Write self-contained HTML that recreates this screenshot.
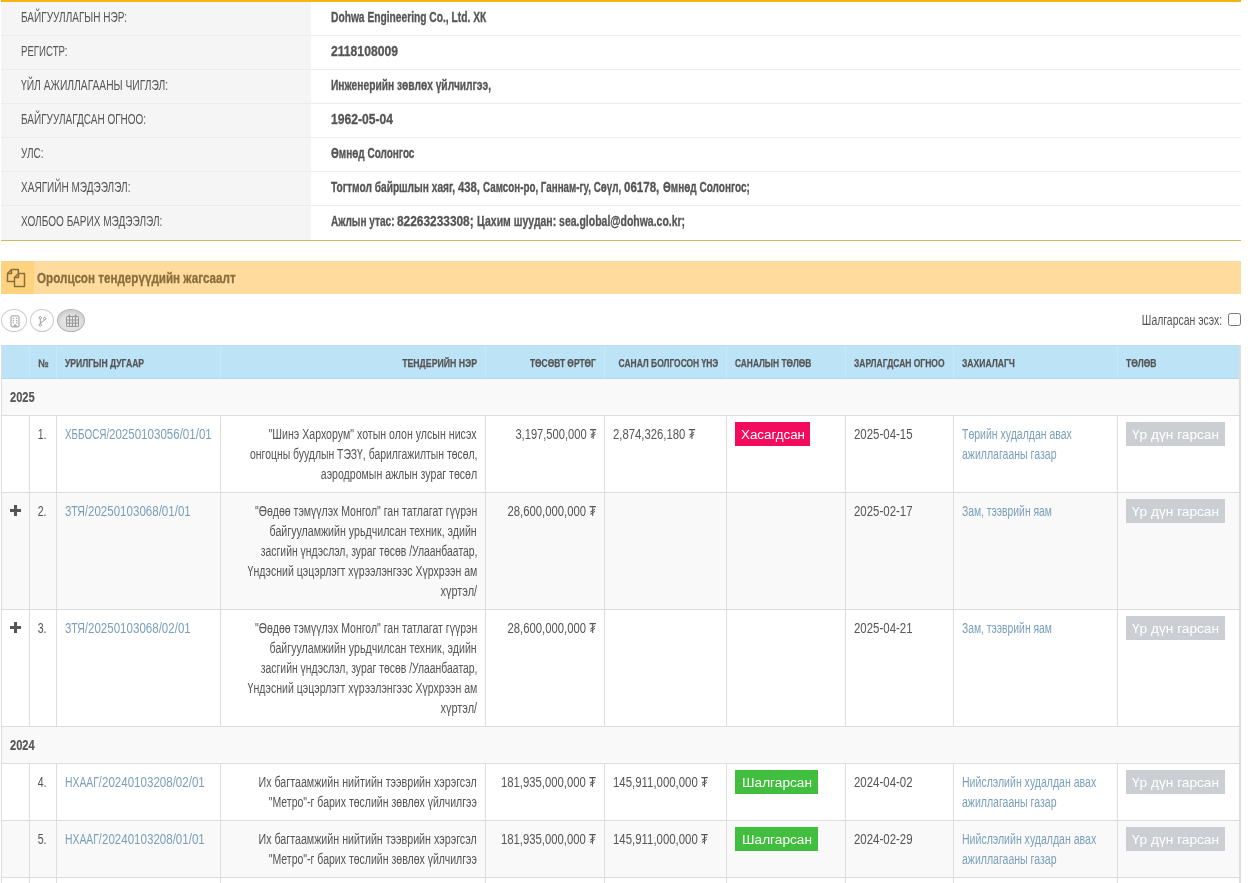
<!DOCTYPE html>
<html lang="mn"><head><meta charset="utf-8"><title>Dohwa Engineering Co., Ltd. ХК</title>
<style>
*{box-sizing:border-box}
html,body{margin:0;padding:0;background:#fff}
body{font-family:"Liberation Sans",sans-serif;font-size:14px;line-height:20px;color:#555;width:1251px;height:883px;overflow:hidden;position:relative}
#wrap{position:absolute;left:1px;top:0;width:1240px;will-change:transform}
table{border-collapse:separate;border-spacing:0;table-layout:fixed}
td,th{padding:0;overflow:visible}
.t{display:inline-block;white-space:nowrap;transform-origin:0 0}
.t.m{transform:none}
.u{display:inline-block;position:relative;height:20px;vertical-align:top}
.s{position:absolute;left:0;top:0;white-space:pre;transform-origin:0 0}
.ln{display:block;height:20px;line-height:20px;position:relative;white-space:nowrap}
.ln .t{position:absolute;left:0;top:0}
.r .ln .t{left:auto;right:0;transform-origin:100% 0}
.list td .ln .t{top:1px}
.list tr.g td .ln .t{top:0}
/* organisation info */
.info{width:1240px;border-top:2px solid #f4b415}
.info td{height:34px;padding:5px 0 0 20px;border-bottom:1px solid #ebebeb;vertical-align:top}
.info td.l{width:310px;background:#f5f5f5}
.info td.v{font-weight:700;-webkit-text-stroke:.3px #555}
.info tr:last-child td{height:35px;border-bottom-color:#cdbb5c}
/* section title */
.band{margin-top:20px;height:33px;background:#ffdc9e;position:relative;color:#8a6d3b;font-weight:700;font-size:16px;padding:7px 0 0 36px;-webkit-text-stroke:.3px #8a6d3b}
.band .ic{position:absolute;left:0;top:0;width:33px;height:33px;background:#ffd27f}
.band .ic svg{position:absolute;left:5px;top:7px}
/* toolbar */
.tools{height:51px;position:relative}
.cb{position:absolute;top:15px;height:23px;border:1px solid #ccc;border-radius:50%;background:#fff;padding:0;margin:0;font:inherit;display:block}
.cb svg{position:absolute}
.cb.on{background:#e2e2e2;border-color:#b4b4b4;box-shadow:inset 0 2px 4px rgba(0,0,0,.12)}
.chk{-webkit-appearance:none;appearance:none;margin:0;padding:0;display:block;position:absolute;right:0;top:19px;width:13px;height:13px;border:1px solid #767676;border-radius:2.5px;background:#fff}
.lab{position:absolute;right:19px;top:17px;width:300px}
/* tender list */
.list{width:1240px;border-left:1px solid #ddd;border-right:2px solid #ddd}
.list th{background:#bde3f7;height:34px;font-size:12px;font-weight:700;color:#555;-webkit-text-stroke:.25px #555;padding:7px 8px 0;text-align:left;vertical-align:top;border-left:1px solid #c8e7f8;border-top:1px solid #c3dbe8;border-bottom:1px solid #b4d9ec}
.list th:first-child,.list td:first-child{border-left:0}
.list td{padding:8px 8px 0;border-left:1px solid #ddd;border-bottom:1px solid #ddd;vertical-align:top}
.list td.n{padding-right:9px}
.list tr.g td{background:#f9f9f9;font-weight:700;font-size:15px;height:37px;-webkit-text-stroke:.15px #555;padding:8px 8px 0}
.list tr.e td{background:#f9f9f9}
.h77 td{height:77px}.h117 td{height:117px}.h57 td{height:57px}.h20 td{height:20px}
a{color:#7a9fba;text-decoration:none}
.b{display:block;height:24px;line-height:26px;color:#fff;font-size:13px;margin-top:-2px;position:relative;white-space:nowrap}
.b .t{position:absolute;top:0}
.pl{display:block;position:relative;width:11px;height:11px;margin:4px 0 0 0}
.pl:before,.pl:after{content:"";position:absolute;background:#555}
.pl:before{left:0;top:4px;width:11px;height:3px}
.pl:after{left:4px;top:0;width:3px;height:11px}
</style></head><body>
<div id="wrap">
<table class="info">
<tr><td class="l"><span class="ln"><span class="t" style="transform:scaleX(0.7161)">БАЙГУУЛЛАГЫН НЭР:</span></span></td><td class="v"><span class="ln"><span class="t" style="transform:scaleX(0.7310)">Dohwa Engineering Co., Ltd. ХК</span></span></td></tr>
<tr><td class="l"><span class="ln"><span class="t" style="transform:scaleX(0.6888)">РЕГИСТР:</span></span></td><td class="v"><span class="ln"><span class="t" style="transform:scaleX(0.8681)">2118108009</span></span></td></tr>
<tr><td class="l"><span class="ln"><span class="t" style="transform:scaleX(0.7326)">ҮЙЛ АЖИЛЛАГААНЫ ЧИГЛЭЛ:</span></span></td><td class="v"><span class="ln"><span class="t" style="transform:scaleX(0.7298)">Инженерийн зөвлөх үйлчилгээ,</span></span></td></tr>
<tr><td class="l"><span class="ln"><span class="t" style="transform:scaleX(0.7140)">БАЙГУУЛАГДСАН ОГНОО:</span></span></td><td class="v"><span class="ln"><span class="t" style="transform:scaleX(0.8641)">1962-05-04</span></span></td></tr>
<tr><td class="l"><span class="ln"><span class="t" style="transform:scaleX(0.7110)">УЛС:</span></span></td><td class="v"><span class="ln"><span class="t" style="transform:scaleX(0.7139)">Өмнөд Солонгос</span></span></td></tr>
<tr><td class="l"><span class="ln"><span class="t" style="transform:scaleX(0.7165)">ХАЯГИЙН МЭДЭЭЛЭЛ:</span></span></td><td class="v"><span class="ln"><span class="t m" style=""><span class="u" style="width:127.03px"><span class="s" style="transform:scaleX(0.7273)">Тогтмол байршлын хаяг, </span></span><span class="u" style="width:25.12px"><span class="s" style="transform:scaleX(0.8068)">438, </span></span><span class="u" style="width:141.00px"><span class="s" style="transform:scaleX(0.7004)">Самсон-ро, Ганнам-гу, Сөүл, </span></span><span class="u" style="width:38.50px"><span class="s" style="transform:scaleX(0.8241)">06178, </span></span><span class="u" style="width:86.95px"><span class="s" style="transform:scaleX(0.7155)">Өмнөд Солонгос;</span></span></span></span></td></tr>
<tr><td class="l"><span class="ln"><span class="t" style="transform:scaleX(0.7189)">ХОЛБОО БАРИХ МЭДЭЭЛЭЛ:</span></span></td><td class="v"><span class="ln"><span class="t m" style=""><span class="u" style="width:66.34px"><span class="s" style="transform:scaleX(0.7198)">Ажлын утас: </span></span><span class="u" style="width:80.00px"><span class="s" style="transform:scaleX(0.8492)">82263233308; </span></span><span class="u" style="width:208.11px"><span class="s" style="transform:scaleX(0.7480)">Цахим шуудан: sea.global@dohwa.co.kr;</span></span></span></span></td></tr>
</table>
<div class="band"><div class="ic"><svg width="20" height="20" viewBox="0 0 20 20" fill="none" stroke="#8a6d3b" stroke-width="1.5" stroke-linejoin="round"><path d="M8.3 13.5H1.5V5.5L5.5 1.5H12.3V5"/><path d="M5.5 1.5V5.5H1.5"/><path d="M8.5 9.5L12.5 5.5H18.5V18.5H8.5Z"/><path d="M12.5 5.5V9.5H8.5"/></svg></div><span class="ln"><span class="t" style="font-size:15px;transform:scaleX(0.7762)">Оролцсон тендерүүдийн жагсаалт</span></span></div>
<div class="tools">
<button type="button" class="cb" title="Байгууллага" style="left:0;width:26px"><svg style="left:8px;top:5px" width="10" height="13" viewBox="0 0 10 13" fill="none" stroke="#999" stroke-width="1"><rect x="1" y=".9" width="8" height="11" rx="1"/><path d="M2.7 3.4h1.4M5.9 3.4h1.4M2.7 5.6h1.4M5.9 5.6h1.4M2.7 7.8h1.4M5.9 7.8h1.4M4 11.9V10h2v1.9"/></svg></button>
<button type="button" class="cb" title="Салбар" style="left:29px;width:24px"><svg style="left:7px;top:6px" width="9" height="11" viewBox="0 0 9 11" fill="none" stroke="#999" stroke-width=".9"><circle cx="2.3" cy="1.8" r="1.2"/><circle cx="6.7" cy="2.6" r="1.2"/><circle cx="2.3" cy="9" r="1.2"/><path d="M2.3 3V7.8M6.7 3.8C6.7 5.6 2.3 5.4 2.3 7.6"/></svg></button>
<button type="button" class="cb on" title="Он" style="left:56px;width:28px"><svg style="left:8px;top:4px" width="13" height="13" viewBox="0 0 13 13" fill="none" stroke="#999" stroke-width="1"><rect x=".5" y="2.5" width="12" height="10" rx=".6"/><path d="M.5 6h12M.5 9.2h12M3.5 2.5v10M6.5 2.5v10M9.5 2.5v10"/><path d="M3.3 .6v2.6M9.7 .6v2.6" stroke-width="1.6"/></svg></button>
<span class="lab r"><span class="ln"><span class="t" style="font-size:13.8px;transform:scaleX(0.7569)">Шалгарсан эсэх:</span></span></span><input type="checkbox" class="chk">
</div>
<table class="list">
<colgroup><col style="width:27px"><col style="width:27px"><col style="width:164px"><col style="width:265px"><col style="width:119px"><col style="width:122px"><col style="width:119px"><col style="width:108px"><col style="width:164px"><col style="width:122px"></colgroup>
<thead><tr><th></th><th class="r n"><span class="ln"><span class="t" style="font-size:11.2px;transform:scaleX(0.8248)">№</span></span></th><th><span class="ln"><span class="t" style="font-size:11.2px;transform:scaleX(0.7665)">УРИЛГЫН ДУГААР</span></span></th><th class="r"><span class="ln"><span class="t" style="font-size:11.2px;transform:scaleX(0.7796)">ТЕНДЕРИЙН НЭР</span></span></th><th class="r"><span class="ln"><span class="t" style="font-size:11.2px;transform:scaleX(0.7505)">ТӨСӨВТ ӨРТӨГ</span></span></th><th class="r"><span class="ln"><span class="t" style="font-size:11.2px;transform:scaleX(0.7534)">САНАЛ БОЛГОСОН ҮНЭ</span></span></th><th><span class="ln"><span class="t" style="font-size:11.2px;transform:scaleX(0.7461)">САНАЛЫН ТӨЛӨВ</span></span></th><th><span class="ln"><span class="t" style="font-size:11.2px;transform:scaleX(0.7579)">ЗАРЛАГДСАН ОГНОО</span></span></th><th><span class="ln"><span class="t" style="font-size:11.2px;transform:scaleX(0.7655)">ЗАХИАЛАГЧ</span></span></th><th><span class="ln"><span class="t" style="font-size:11.2px;transform:scaleX(0.7588)">ТӨЛӨВ</span></span></th></tr></thead>
<tbody>
<tr class="g"><td colspan="10"><span class="ln"><span class="t" style="font-size:15px;transform:scaleX(0.7401)">2025</span></span></td></tr>
<tr class="h77"><td></td><td class="r n"><span class="ln"><span class="t" style="font-size:13.8px;transform:scaleX(0.7639)">1.</span></span></td><td><span class="ln"><a href="#"><span class="t m" style="font-size:13.8px;"><span class="u" style="width:44.16px"><span class="s" style="transform:scaleX(0.7162)">ХББОСЯ/</span></span><span class="u" style="width:102.77px"><span class="s" style="transform:scaleX(0.8371)">20250103056/01/01</span></span></span></a></span></td><td class="r"><span class="ln"><span class="t" style="font-size:13.8px;transform:scaleX(0.7690)">&quot;Шинэ Хархорум&quot; хотын олон улсын нисэх</span></span><span class="ln"><span class="t" style="font-size:13.8px;transform:scaleX(0.7544)">онгоцны буудлын ТЭЗҮ, барилгажилтын төсөл,</span></span><span class="ln"><span class="t" style="font-size:13.8px;transform:scaleX(0.7656)">аэродромын ажлын зураг төсөл</span></span></td><td class="r"><span class="ln"><span class="t" style="font-size:13.8px;transform:scaleX(0.8067)">3,197,500,000 ₮</span></span></td><td><span class="ln"><span class="t" style="font-size:13.8px;transform:scaleX(0.8193)">2,874,326,180 ₮</span></span></td><td><span class="b" style="background:#f30b5c;width:75px"><span class="t" style="left:6px;font-size:12.5px;transform:scaleX(1.0686)">Хасагдсан</span></span></td><td><span class="ln"><span class="t" style="font-size:13.8px;transform:scaleX(0.8298)">2025-04-15</span></span></td><td><span class="ln"><a href="#"><span class="t" style="font-size:13.8px;transform:scaleX(0.7611)">Төрийн худалдан авах</span></a></span><span class="ln"><a href="#"><span class="t" style="font-size:13.8px;transform:scaleX(0.7639)">ажиллагааны газар</span></a></span></td><td><span class="b" style="background:#cbced3;width:99px"><span class="t" style="left:6px;font-size:12.5px;transform:scaleX(1.0931)">Үр дүн гарсан</span></span></td></tr>
<tr class="h117 e"><td><span class="pl"></span></td><td class="r n"><span class="ln"><span class="t" style="font-size:13.8px;transform:scaleX(0.7639)">2.</span></span></td><td><span class="ln"><a href="#"><span class="t m" style="font-size:13.8px;"><span class="u" style="width:22.92px"><span class="s" style="transform:scaleX(0.7653)">ЗТЯ/</span></span><span class="u" style="width:102.77px"><span class="s" style="transform:scaleX(0.8371)">20250103068/01/01</span></span></span></a></span></td><td class="r"><span class="ln"><span class="t" style="font-size:13.8px;transform:scaleX(0.7628)">&quot;Өөдөө тэмүүлэх Монгол&quot; ган татлагат гүүрэн</span></span><span class="ln"><span class="t" style="font-size:13.8px;transform:scaleX(0.7708)">байгууламжийн урьдчилсан техник, эдийн</span></span><span class="ln"><span class="t" style="font-size:13.8px;transform:scaleX(0.7538)">засгийн үндэслэл, зураг төсөв /Улаанбаатар,</span></span><span class="ln"><span class="t" style="font-size:13.8px;transform:scaleX(0.7650)">Үндэсний цэцэрлэгт хүрээлэнгээс Хүрхрээн ам</span></span><span class="ln"><span class="t" style="font-size:13.8px;transform:scaleX(0.7933)">хүртэл/</span></span></td><td class="r"><span class="ln"><span class="t" style="font-size:13.8px;transform:scaleX(0.8194)">28,600,000,000 ₮</span></span></td><td></td><td></td><td><span class="ln"><span class="t" style="font-size:13.8px;transform:scaleX(0.8298)">2025-02-17</span></span></td><td><span class="ln"><a href="#"><span class="t" style="font-size:13.8px;transform:scaleX(0.7490)">Зам, тээврийн яам</span></a></span></td><td><span class="b" style="background:#cbced3;width:99px"><span class="t" style="left:6px;font-size:12.5px;transform:scaleX(1.0931)">Үр дүн гарсан</span></span></td></tr>
<tr class="h117"><td><span class="pl"></span></td><td class="r n"><span class="ln"><span class="t" style="font-size:13.8px;transform:scaleX(0.7639)">3.</span></span></td><td><span class="ln"><a href="#"><span class="t m" style="font-size:13.8px;"><span class="u" style="width:22.92px"><span class="s" style="transform:scaleX(0.7653)">ЗТЯ/</span></span><span class="u" style="width:102.77px"><span class="s" style="transform:scaleX(0.8371)">20250103068/02/01</span></span></span></a></span></td><td class="r"><span class="ln"><span class="t" style="font-size:13.8px;transform:scaleX(0.7628)">&quot;Өөдөө тэмүүлэх Монгол&quot; ган татлагат гүүрэн</span></span><span class="ln"><span class="t" style="font-size:13.8px;transform:scaleX(0.7708)">байгууламжийн урьдчилсан техник, эдийн</span></span><span class="ln"><span class="t" style="font-size:13.8px;transform:scaleX(0.7538)">засгийн үндэслэл, зураг төсөв /Улаанбаатар,</span></span><span class="ln"><span class="t" style="font-size:13.8px;transform:scaleX(0.7650)">Үндэсний цэцэрлэгт хүрээлэнгээс Хүрхрээн ам</span></span><span class="ln"><span class="t" style="font-size:13.8px;transform:scaleX(0.7933)">хүртэл/</span></span></td><td class="r"><span class="ln"><span class="t" style="font-size:13.8px;transform:scaleX(0.8194)">28,600,000,000 ₮</span></span></td><td></td><td></td><td><span class="ln"><span class="t" style="font-size:13.8px;transform:scaleX(0.8298)">2025-04-21</span></span></td><td><span class="ln"><a href="#"><span class="t" style="font-size:13.8px;transform:scaleX(0.7490)">Зам, тээврийн яам</span></a></span></td><td><span class="b" style="background:#cbced3;width:99px"><span class="t" style="left:6px;font-size:12.5px;transform:scaleX(1.0931)">Үр дүн гарсан</span></span></td></tr>
<tr class="g"><td colspan="10"><span class="ln"><span class="t" style="font-size:15px;transform:scaleX(0.7401)">2024</span></span></td></tr>
<tr class="h57"><td></td><td class="r n"><span class="ln"><span class="t" style="font-size:13.8px;transform:scaleX(0.7639)">4.</span></span></td><td><span class="ln"><a href="#"><span class="t m" style="font-size:13.8px;"><span class="u" style="width:36.72px"><span class="s" style="transform:scaleX(0.7510)">НХААГ/</span></span><span class="u" style="width:102.77px"><span class="s" style="transform:scaleX(0.8371)">20240103208/02/01</span></span></span></a></span></td><td class="r"><span class="ln"><span class="t" style="font-size:13.8px;transform:scaleX(0.7747)">Их багтаамжийн нийтийн тээврийн хэрэгсэл</span></span><span class="ln"><span class="t" style="font-size:13.8px;transform:scaleX(0.7629)">&quot;Метро&quot;-г барих төслийн зөвлөх үйлчилгээ</span></span></td><td class="r"><span class="ln"><span class="t" style="font-size:13.8px;transform:scaleX(0.8195)">181,935,000,000 ₮</span></span></td><td><span class="ln"><span class="t" style="font-size:13.8px;transform:scaleX(0.8268)">145,911,000,000 ₮</span></span></td><td><span class="b" style="background:#42be3e;width:83px"><span class="t" style="left:7px;font-size:12.5px;transform:scaleX(1.0938)">Шалгарсан</span></span></td><td><span class="ln"><span class="t" style="font-size:13.8px;transform:scaleX(0.8298)">2024-04-02</span></span></td><td><span class="ln"><a href="#"><span class="t" style="font-size:13.8px;transform:scaleX(0.7639)">Нийслэлийн худалдан авах</span></a></span><span class="ln"><a href="#"><span class="t" style="font-size:13.8px;transform:scaleX(0.7639)">ажиллагааны газар</span></a></span></td><td><span class="b" style="background:#cbced3;width:99px"><span class="t" style="left:6px;font-size:12.5px;transform:scaleX(1.0931)">Үр дүн гарсан</span></span></td></tr>
<tr class="h57 e"><td></td><td class="r n"><span class="ln"><span class="t" style="font-size:13.8px;transform:scaleX(0.7639)">5.</span></span></td><td><span class="ln"><a href="#"><span class="t m" style="font-size:13.8px;"><span class="u" style="width:36.72px"><span class="s" style="transform:scaleX(0.7510)">НХААГ/</span></span><span class="u" style="width:102.77px"><span class="s" style="transform:scaleX(0.8371)">20240103208/01/01</span></span></span></a></span></td><td class="r"><span class="ln"><span class="t" style="font-size:13.8px;transform:scaleX(0.7747)">Их багтаамжийн нийтийн тээврийн хэрэгсэл</span></span><span class="ln"><span class="t" style="font-size:13.8px;transform:scaleX(0.7629)">&quot;Метро&quot;-г барих төслийн зөвлөх үйлчилгээ</span></span></td><td class="r"><span class="ln"><span class="t" style="font-size:13.8px;transform:scaleX(0.8195)">181,935,000,000 ₮</span></span></td><td><span class="ln"><span class="t" style="font-size:13.8px;transform:scaleX(0.8268)">145,911,000,000 ₮</span></span></td><td><span class="b" style="background:#42be3e;width:83px"><span class="t" style="left:7px;font-size:12.5px;transform:scaleX(1.0938)">Шалгарсан</span></span></td><td><span class="ln"><span class="t" style="font-size:13.8px;transform:scaleX(0.8298)">2024-02-29</span></span></td><td><span class="ln"><a href="#"><span class="t" style="font-size:13.8px;transform:scaleX(0.7639)">Нийслэлийн худалдан авах</span></a></span><span class="ln"><a href="#"><span class="t" style="font-size:13.8px;transform:scaleX(0.7639)">ажиллагааны газар</span></a></span></td><td><span class="b" style="background:#cbced3;width:99px"><span class="t" style="left:6px;font-size:12.5px;transform:scaleX(1.0931)">Үр дүн гарсан</span></span></td></tr>
<tr class="h20"><td></td><td></td><td></td><td></td><td></td><td></td><td></td><td></td><td></td><td></td></tr>
</tbody></table>
</div>
</body></html>
